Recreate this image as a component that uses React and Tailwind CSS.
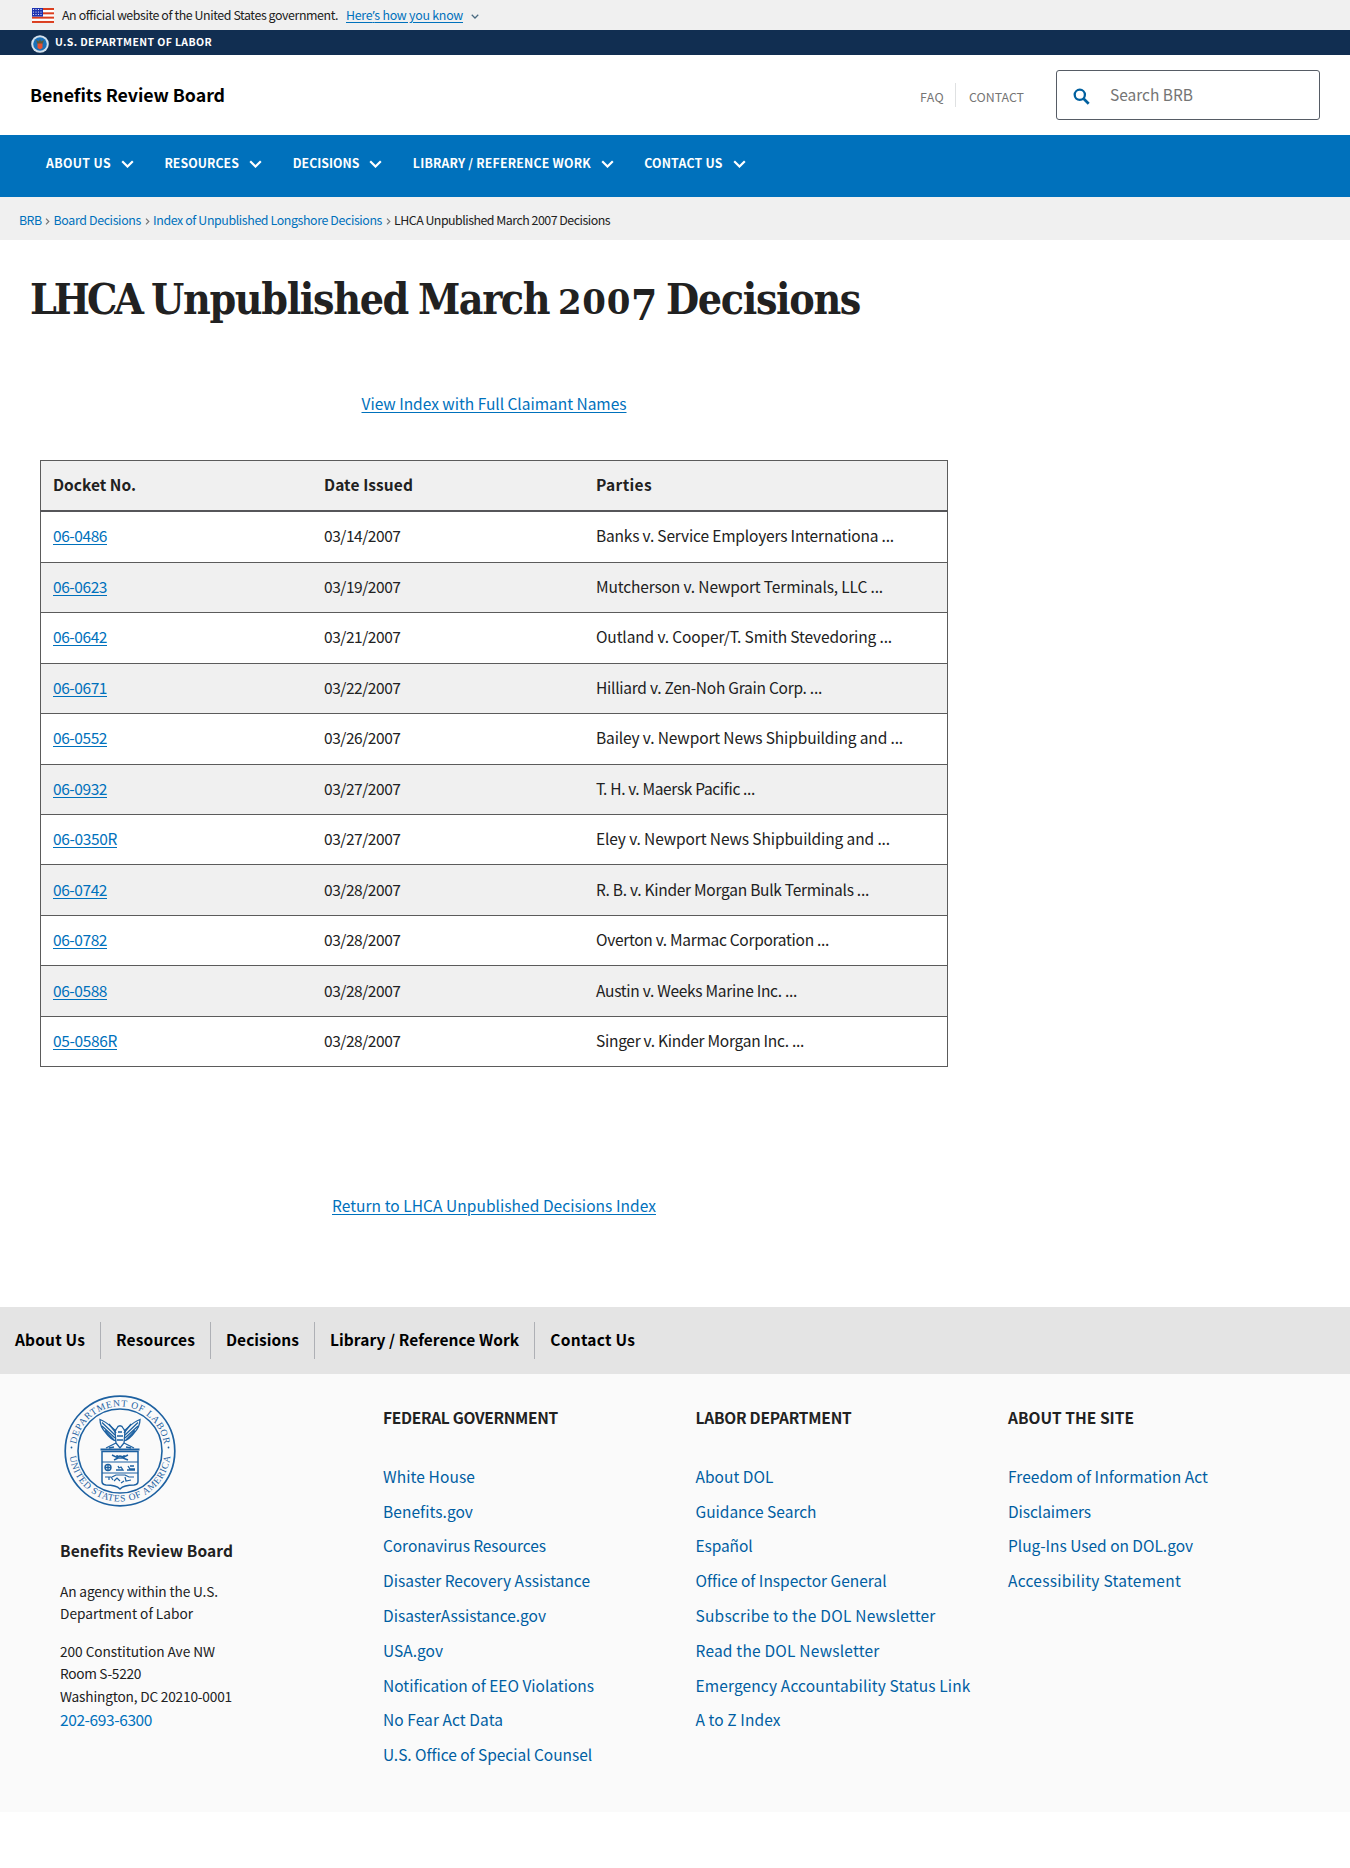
import React, { useLayoutEffect, useRef } from "react";

/* Inline text set to a given measure by adjusting its tracking. */
function T({ w, className = "", children }) {
  const ref = useRef(null);
  useLayoutEffect(() => {
    const el = ref.current;
    el.style.letterSpacing = "0px";
    const natural = el.getBoundingClientRect().width;
    const n = el.textContent.length;
    el.style.letterSpacing = (w - natural) / n + "px";
  }, [w]);
  return (
    <span className="inline-block shrink-0 whitespace-nowrap" style={{ width: w }}>
      <span ref={ref} className={className}>{children}</span>
    </span>
  );
}

const menu = [
  ["ABOUT US", 65, 30.4],
  ["RESOURCES", 74.5, 30.9],
  ["DECISIONS", 66.7, 30.4],
  ["LIBRARY / REFERENCE WORK", 178, 30.3],
  ["CONTACT US", 78.5, 0],
];

const crumbs = [
  ["BRB", 22.5],
  ["Board Decisions", 87.5],
  ["Index of Unpublished Longshore Decisions", 229],
];

const rows = [
  ["06-0486", "03/14/2007", "Banks v. Service Employers Internationa ...", 298],
  ["06-0623", "03/19/2007", "Mutcherson v. Newport Terminals, LLC ...", 287],
  ["06-0642", "03/21/2007", "Outland v. Cooper/T. Smith Stevedoring ...", 296],
  ["06-0671", "03/22/2007", "Hilliard v. Zen-Noh Grain Corp. ...", 226],
  ["06-0552", "03/26/2007", "Bailey v. Newport News Shipbuilding and ...", 307],
  ["06-0932", "03/27/2007", "T. H. v. Maersk Pacific ...", 159],
  ["06-0350R", "03/27/2007", "Eley v. Newport News Shipbuilding and ...", 294],
  ["06-0742", "03/28/2007", "R. B. v. Kinder Morgan Bulk Terminals ...", 273],
  ["06-0782", "03/28/2007", "Overton v. Marmac Corporation ...", 233],
  ["06-0588", "03/28/2007", "Austin v. Weeks Marine Inc. ...", 201],
  ["05-0586R", "03/28/2007", "Singer v. Kinder Morgan Inc. ...", 208],
];

const footerMenu = [
  ["About Us", 70],
  ["Resources", 79],
  ["Decisions", 73],
  ["Library / Reference Work", 189.3],
  ["Contact Us", 85],
];

const columns = [
  {
    title: "FEDERAL GOVERNMENT", tw: 175, links: [
      ["White House", 92], ["Benefits.gov", 90], ["Coronavirus Resources", 163],
      ["Disaster Recovery Assistance", 207], ["DisasterAssistance.gov", 163], ["USA.gov", 60],
      ["Notification of EEO Violations", 211], ["No Fear Act Data", 120], ["U.S. Office of Special Counsel", 209],
    ],
  },
  {
    title: "LABOR DEPARTMENT", tw: 156, links: [
      ["About DOL", 78], ["Guidance Search", 121], ["Español", 57], ["Office of Inspector General", 191],
      ["Subscribe to the DOL Newsletter", 240], ["Read the DOL Newsletter", 184],
      ["Emergency Accountability Status Link", 275], ["A to Z Index", 85],
    ],
  },
  {
    title: "ABOUT THE SITE", tw: 126, links: [
      ["Freedom of Information Act", 200], ["Disclaimers", 83], ["Plug-Ins Used on DOL.gov", 185],
      ["Accessibility Statement", 173],
    ],
  },
];

function Flag() {
  return (
    <svg width="22" height="15" viewBox="0 0 22 15" className="shrink-0">
      <rect width="22" height="15" fill="#fff" />
      {[0, 4, 8, 12].map((y) => <rect key={y} y={y * 1.08} width="22" height="2" fill="#db3e1f" />)}
      <rect width="11" height="8.6" fill="#1e33b1" />
      {[1.5, 4, 6.5].map((y) => [1.5, 4, 6.5, 9].map((x) => (
        <circle key={x + "-" + y} cx={x} cy={y} r="0.6" fill="#fff" />
      )))}
    </svg>
  );
}

function SmallSeal() {
  return (
    <svg width="18" height="18" viewBox="0 0 18 18" className="shrink-0">
      <circle cx="9" cy="9" r="8.8" fill="#d5e1ec" />
      <circle cx="9" cy="9" r="6.8" fill="#1a70b8" />
      <path d="M5 5 8 6.5 9 4 10 6.5 13 5 11.500 9h-5Z" fill="#5d5b3c" />
      <path d="M6.500 8.500h5v4.500L9 14.500l-2.500-1.500Z" fill="#e8512f" />
    </svg>
  );
}

function Seal() {
  return (
    <svg width="112" height="112" viewBox="0 0 112 112" fill="none" stroke="#1d61a1">
      <defs>
        <path id="arcTop" d="M11.500 56a44.500 44.500 0 0 1 89 0" />
        <path id="arcBottom" d="M5.500 56a50.500 50.500 0 0 0 101 0" />
      </defs>
      <circle cx="56" cy="56" r="54.8" strokeWidth="1.7" />
      <circle cx="56" cy="56" r="42" strokeWidth="1.6" />
      <g fill="#1d61a1" stroke="none" className="font-['Liberation_Serif'] text-[9.600px]">
        <text textAnchor="middle"><textPath href="#arcTop" startOffset="50%" textLength="126">DEPARTMENT OF LABOR</textPath></text>
        <text textAnchor="middle"><textPath href="#arcBottom" startOffset="50%" textLength="148">UNITED STATES OF AMERICA</textPath></text>
        <circle cx="7.5" cy="52.5" r="0.9" />
        <circle cx="104.5" cy="52.5" r="0.9" />
      </g>
      <g strokeWidth="1.3">
        <path d="M52 36C46 31 43 27 36 24.500C36 30 38 34 42 38C45 42 49 45 52 46" />
        <path d="M60 36C66 31 69 27 76 24.500C76 30 74 34 70 38C67 42 63 45 60 46" />
        <path d="M38 27.500 51 40M38 31 51 43M41 35.500 50 45M74 27.500 61 40M74 31 61 43M71 35.500 62 45M45 29 52 38M67 29 60 38" />
        <path d="M53 33c1-3 5-3 6 0l2 3-1 12-4 5-4-5-1-12Z M54 37h4M53 41h6M53 45h6" />
        <path d="M52 48 46 51 42 53M60 48 66 51 70 53M50 52l-5 1M62 52l5 1" />
      </g>
      <path d="M36.500 54.500h39" strokeWidth="1.800" />
      <path d="M38 56.500h36v30q0 3-4 3.500-10 0-14 4-4-4-14-4-4-.5-4-3.500Z" strokeWidth="1.500" />
      <path d="M38 67h36M38 78h36" strokeWidth="1.200" />
      <path d="M48 60l4 2 4-1 4 1 4-2M50 65l4-2h5l5 2M53 60v4M60 60v4" strokeWidth="1.400" />
      <circle cx="44" cy="72.500" r="3" strokeWidth="1.400" />
      <path d="M41 72.500h6M44 69.500v6M52 75h7l-2-3-2 1-1-2M64 71l2 3h5M63 75h8M66 71h4" strokeWidth="1.300" />
      <path d="M41 82h6l2 3M48 82l4-2h9l4 2h5M50 86l3-3 3 3M61 82l1 4 5-1M45 82v3M57 88l3-2" strokeWidth="1.200" />
    </svg>
  );
}

function Down({ width = 13, height = 8, sw = 2.2, color = "white" }) {
  return (
    <svg width={width} height={height} viewBox="0 0 13 8" fill="none" stroke={color} strokeWidth={sw} className="shrink-0">
      <path d="M1.200 1.200 6.500 6.500 11.800 1.200" />
    </svg>
  );
}

function Crumb() {
  return (
    <svg width="5" height="7" viewBox="0 0 5 7" fill="none" stroke="#757575" className="mt-[3px] shrink-0">
      <path d="M1 .700 3.800 3.500 1 6.300" strokeWidth="1.200" />
    </svg>
  );
}

export default function App() {
  return (
    <div className="min-h-[1868px] w-[1350px] bg-white font-['Noto_Sans_CJK_SC',sans-serif] text-[15.5px] leading-[25px] text-[#212121]">
      <div className="flex h-[30px] items-center bg-[#f0f0f0] pl-8 text-[12.4px] leading-[30px]">
        <Flag />
        <div className="ml-2 flex"><T w={276}>An official website of the United States government.</T></div>
        <div className="ml-2 flex text-[#0071bc]">
          <T w={117} className="underline underline-offset-2">Here<span className="font-['Noto_Sans']">’</span>s how you know</T>
        </div>
        <div className="ml-2 mt-[3px]"><Down width={8} height={5} sw={2} color="#4a6a80" /></div>
      </div>

      <div className="flex h-[25px] items-start bg-[#112e51] pl-[31px] text-[10.5px] font-bold leading-[25px] text-white">
        <div className="mt-[5px]"><SmallSeal /></div>
        <div className="-mt-px ml-1.5 flex"><T w={157}>U.S. DEPARTMENT OF LABOR</T></div>
      </div>

      <header className="flex h-20 items-center pl-[30px] pr-[30px]">
        <div className="mt-[-1px] flex text-[17.8px] font-bold text-black"><T w={195}>Benefits Review Board</T></div>
        <div className="ml-auto mt-1 flex items-center text-[12.4px] text-[#757575]">
          <T w={24}>FAQ</T>
          <div className="mb-1 ml-[11px] mr-[13px] h-6 w-px bg-[#dfe1e2]" />
          <T w={55}>CONTACT</T>
        </div>
        <div className="ml-8 flex h-[50px] w-[264px] items-center rounded-[3px] border border-[#565c65] pl-4 text-[#757575]">
          <svg width="17" height="17" viewBox="0 0 17 17" fill="none" stroke="#00609f" className="mt-[3px]">
            <circle cx="6.800" cy="6.800" r="5.100" strokeWidth="2.300" />
            <path d="m10.700 10.700 5 5" strokeWidth="2.700" />
          </svg>
          <div className="mb-0.5 ml-5 flex"><T w={83}>Search BRB</T></div>
        </div>
      </header>

      <nav className="flex h-[62px] items-start bg-[#0071bc] pl-[46px] pt-4 text-[12.3px] font-bold text-white">
        {menu.map(([label, w, gap]) => (
          <div key={label} className="flex items-center" style={{ marginRight: gap }}>
            <T w={w}>{label}</T>
            <div className="ml-2.5"><Down /></div>
          </div>
        ))}
      </nav>

      <div className="flex h-[43px] items-center gap-[3.5px] bg-[#f0f0f0] pl-[19px] pt-[3px] text-[12.4px]">
        {crumbs.map(([label, w]) => (
          <React.Fragment key={label}>
            <span className="flex text-[#0071bc]"><T w={w}>{label}</T></span>
            <Crumb />
          </React.Fragment>
        ))}
        <T w={216}>LHCA Unpublished March 2007 Decisions</T>
      </div>

      <main className="h-[1067px] w-[988px]">
        <h1 className="flex h-[120px] items-start pl-[30px] pt-[29px] font-['DejaVu_Serif_Condensed','DejaVu_Serif',serif] text-[42.5px] font-bold leading-[60px]">
          <T w={111}>LHCA</T>
          <span className="ml-2.5 flex"><T w={257}>Unpublished</T></span>
          <span className="ml-2.5 flex"><T w={131}>March</T></span>
          <span className="ml-[9px] flex">
            <span className="relative top-[3px] font-['DejaVu_Serif'] text-[34px]"><T w={73}>200</T></span>
            <span className="relative top-[7px] text-[42px]"><T w={25}>7</T></span>
          </span>
          <span className="ml-2.5 flex"><T w={194}>Decisions</T></span>
        </h1>
        <div className="flex h-[100px] justify-center pt-[31px] text-[#0071bc]">
          <T w={265} className="underline underline-offset-2">View Index with Full Claimant Names</T>
        </div>
        <table className="ml-10 w-[908px] table-fixed border-collapse border border-[#5b5b5b] text-left">
          <colgroup><col className="w-[271.500px]" /><col className="w-[272px]" /><col /></colgroup>
          <thead>
            <tr className="h-[50.500px] border-b-2 border-[#565659] bg-[#f0f0f0] align-middle">
              <th className="p-0 pb-0.5 pl-3"><div className="flex"><T w={83}>Docket No.</T></div></th>
              <th className="p-0 pb-0.5 pl-3"><div className="flex"><T w={89}>Date Issued</T></div></th>
              <th className="p-0 pb-0.5 pl-3"><div className="flex"><T w={56}>Parties</T></div></th>
            </tr>
          </thead>
          <tbody>
            {rows.map(([no, date, name, w]) => (
              <tr key={no} className="h-[50.450px] border-b border-[#5b5b5b] first:h-[51.300px] even:bg-[#f0f0f0]">
                <td className="p-0 pb-0.5 pl-3 text-[#0071bc]"><div className="flex"><T w={no.endsWith("R") ? 64 : 54} className="underline underline-offset-2">{no}</T></div></td>
                <td className="p-0 pb-0.5 pl-3"><div className="flex"><T w={76.5}>{date}</T></div></td>
                <td className="p-0 pb-0.5 pl-3"><div className="flex"><T w={w}>{name}</T></div></td>
              </tr>
            ))}
          </tbody>
        </table>
        <div className="mt-[126px] flex justify-center text-[#0071bc]">
          <T w={324} className="underline underline-offset-2">Return to LHCA Unpublished Decisions Index</T>
        </div>
      </main>

      <div className="flex h-[67px] items-center bg-[#e4e4e4] font-bold text-black">
        {footerMenu.map(([label, w], i) => (
          <div key={label} className={"flex h-[37px] items-center px-[15px] pb-0.5 " + (i < 4 ? "border-r border-[#aeb0b5]" : "")}>
            <T w={w}>{label}</T>
          </div>
        ))}
      </div>

      <footer className="flex h-[438px] bg-[#fafafa]">
        <div className="w-[383px] pl-[60px] pt-[21px]">
          <div className="ml-1"><Seal /></div>
          <div className="mt-[31px] flex font-bold"><T w={173}>Benefits Review Board</T></div>
          <div className="mt-[17px] text-[13.700px] leading-[22px]">
            <div className="flex"><T w={158}>An agency within the U.S.</T></div>
            <div className="flex"><T w={133}>Department of Labor</T></div>
          </div>
          <div className="mt-4 text-[13.700px] leading-[22.300px]">
            <div className="flex"><T w={155}>200 Constitution Ave NW</T></div>
            <div className="flex"><T w={81}>Room S-5220</T></div>
            <div className="flex"><T w={172}>Washington, DC 20210-0001</T></div>
          </div>
          <div className="flex text-[#0071bc]"><T w={92}>202-693-6300</T></div>
        </div>
        {columns.map((c) => (
          <div key={c.title} className="w-[312.500px] pt-[31px]">
            <div className="flex font-bold"><T w={c.tw}>{c.title}</T></div>
            <ul className="mt-[29px] text-[#005ea2]">
              {c.links.map(([label, w]) => (
                <li key={label} className="flex h-[34.800px] items-center"><T w={w}>{label}</T></li>
              ))}
            </ul>
          </div>
        ))}
      </footer>
    </div>
  );
}
